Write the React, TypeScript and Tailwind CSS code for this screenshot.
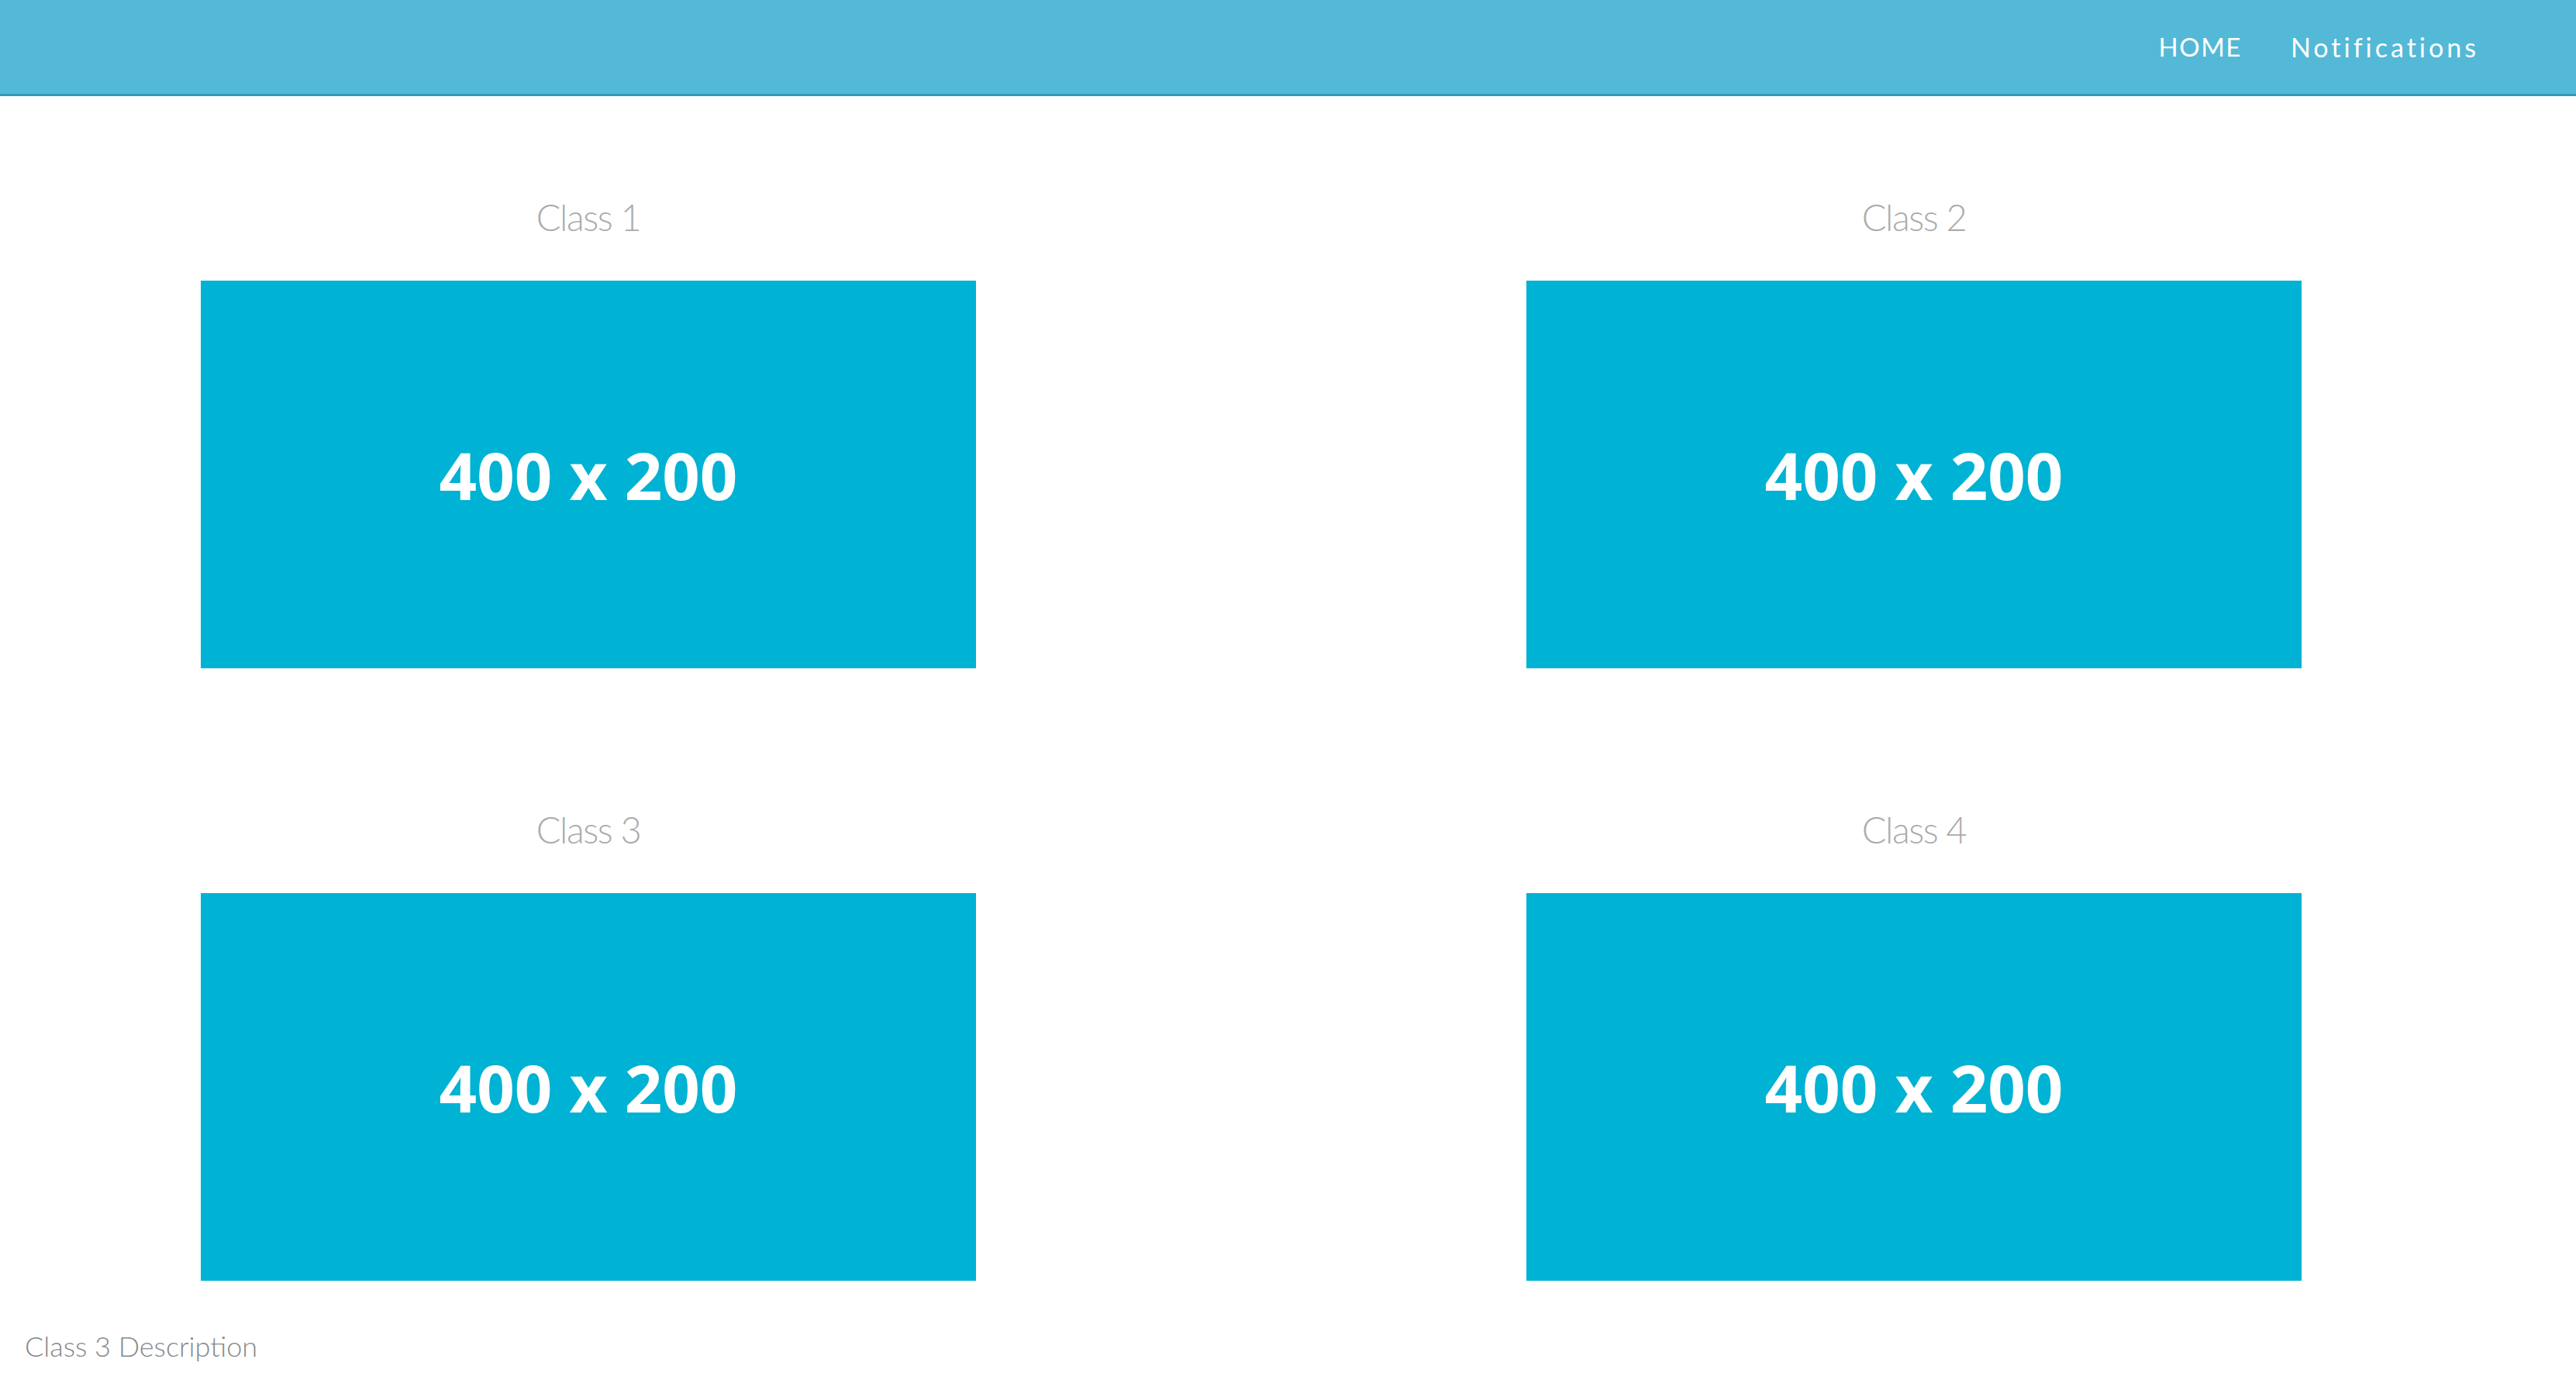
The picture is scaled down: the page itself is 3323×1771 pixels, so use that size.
import React from "react";

function Card({ title }: { title: string }) {
  return (
    <div className="flex w-[1000px] flex-col items-center">
      <h3 className="text-[47px] font-light leading-none tracking-[-1.5px] text-[#ababab] [font-family:Lato,'Open_Sans',sans-serif]">
        {title}
      </h3>
      <div className="mt-[58px] flex h-[500px] w-[1000px] items-center justify-center bg-[#00b2d3]">
        <span className="text-[85px] font-bold leading-none text-white [font-family:'Open_Sans',sans-serif]">
          400 x 200
        </span>
      </div>
    </div>
  );
}

export default function App() {
  return (
    <div className="min-h-screen bg-white">
      <nav className="flex h-[124px] items-center justify-end border-b-[3px] border-[#2f9bb5] bg-[#53b9d7] pr-[125px]">
        <a className="text-[33px] tracking-[1.5px] text-white [font-family:Lato,sans-serif]">HOME</a>
        <a className="ml-[63px] text-[34px] tracking-[4px] text-white [font-family:Lato,sans-serif]">Notifications</a>
      </nav>
      <main className="pt-[133px]">
        <div className="flex gap-[710px] pl-[259px]">
          <Card title="Class 1" />
          <Card title="Class 2" />
        </div>
        <div className="mt-[185px] flex gap-[710px] pl-[259px]">
          <Card title="Class 3" />
          <Card title="Class 4" />
        </div>
        <p className="mt-[66px] pl-[32px] text-[36px] font-light leading-none text-[#86888c] [font-family:Lato,sans-serif]">
          Class 3 Description
        </p>
      </main>
    </div>
  );
}
